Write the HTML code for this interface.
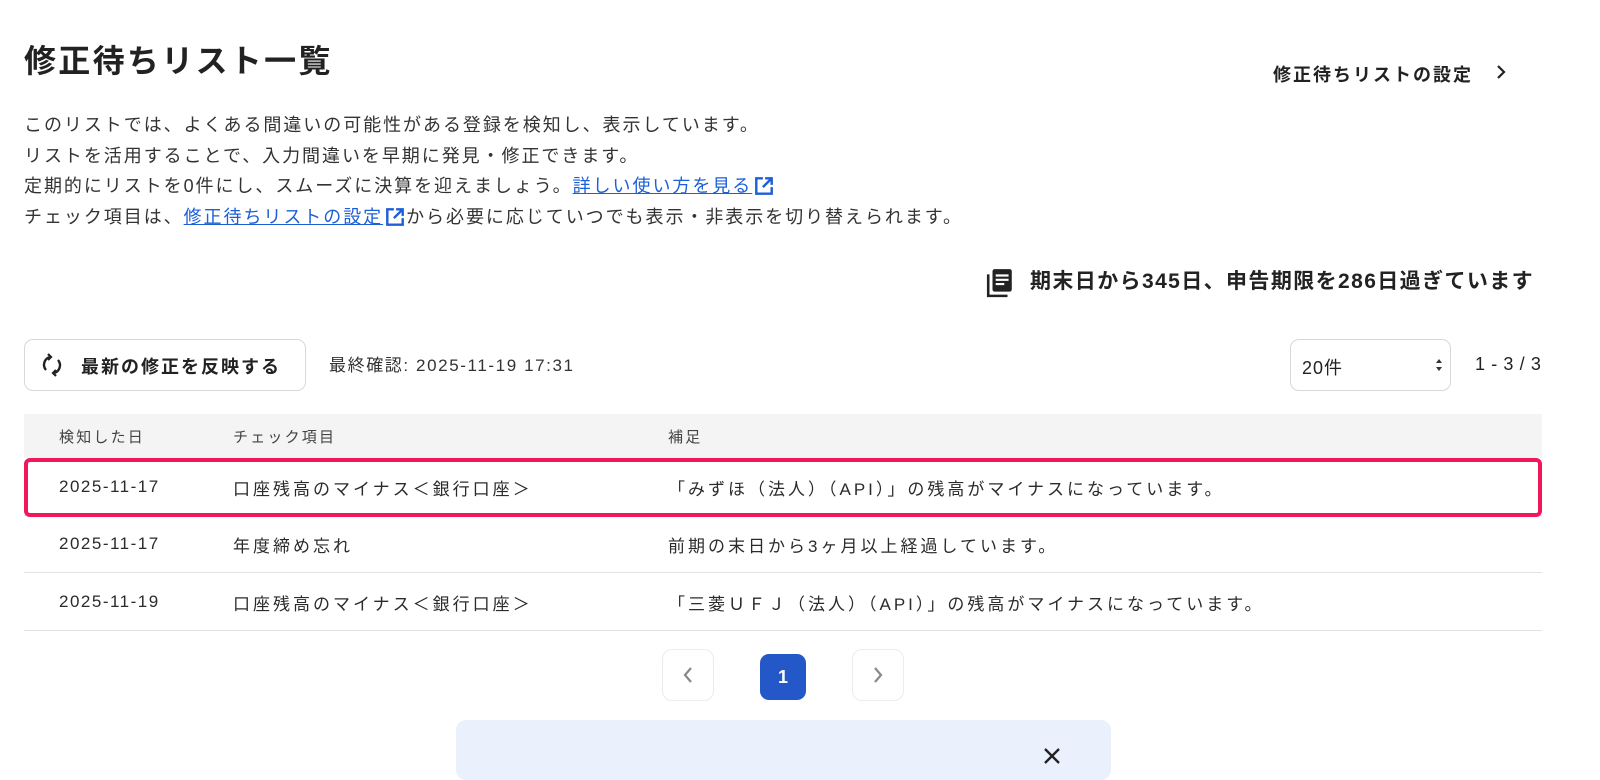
<!DOCTYPE html><html><head><meta charset="utf-8"><style>
*{margin:0;padding:0;box-sizing:border-box}
body{width:1600px;height:769px;overflow:hidden;background:#fff;font-family:"Liberation Sans","Noto Sans CJK JP",sans-serif;color:#2b2b2b;position:relative}
.a{position:absolute;white-space:nowrap}
h1{position:absolute;left:24px;top:36px;font-size:32px;letter-spacing:2.3px;font-weight:bold;color:#222}
.desc{left:24px;top:110px;font-size:18px;letter-spacing:1.95px;line-height:30.5px;color:#333}
a{color:#1d5fd6;text-decoration:underline}
.ext{display:inline-block;width:22px;height:22px;vertical-align:-5px;margin-left:1px}
.btn{left:24px;top:339px;width:282px;height:52px;border:1px solid #d8d8d8;border-radius:9px}
.thead{left:24px;top:414px;width:1518px;height:44px;background:#f5f4f4;font-size:15px;letter-spacing:2.2px;color:#444}
.row{left:24px;width:1518px;height:57px;border-bottom:1px solid #e2e2e2;font-size:17px;letter-spacing:3px;color:#2b2b2b}
.row span,.thead span{position:absolute;top:0;bottom:0;display:flex;align-items:center}
.row .c1{letter-spacing:1.5px}
.c1{left:35px}.c2{left:209px}.c3{left:644px}
.hl{left:24px;top:458px;width:1518px;height:59px;border:4px solid #f0185a;border-radius:6px}
.pg{top:649px;width:52px;height:52px;border:1px solid #ececec;border-radius:10px}
</style></head><body>
<h1>修正待ちリスト一覧</h1>
<div class="a" style="left:1273px;top:61px;font-size:18px;letter-spacing:2px;font-weight:bold;color:#222">修正待ちリストの設定</div>
<svg class="a" style="left:1494px;top:64px" width="14" height="16" viewBox="0 0 14 16"><path d="M4 2l6 6-6 6" stroke="#222" stroke-width="2.2" fill="none"/></svg>
<div class="a desc">このリストでは、よくある間違いの可能性がある登録を検知し、表示しています。<br>リストを活用することで、入力間違いを早期に発見・修正できます。<br>定期的にリストを0件にし、スムーズに決算を迎えましょう。<a>詳しい使い方を見る</a><svg class="ext" viewBox="0 0 20 20"><path d="M9 3H3v14h14v-6" stroke="#1d5fd6" stroke-width="2.2" fill="none"/><path d="M11 3h6v6M17 3l-8 8" stroke="#1d5fd6" stroke-width="2.2" fill="none"/></svg><br>チェック項目は、<a>修正待ちリストの設定</a><svg class="ext" viewBox="0 0 20 20"><path d="M9 3H3v14h14v-6" stroke="#1d5fd6" stroke-width="2.2" fill="none"/><path d="M11 3h6v6M17 3l-8 8" stroke="#1d5fd6" stroke-width="2.2" fill="none"/></svg>から必要に応じていつでも表示・非表示を切り替えられます。</div>
<svg class="a" style="left:986px;top:268px" width="28" height="30" viewBox="0 0 26 28"><path d="M2 6v20h18" stroke="#222" stroke-width="2.4" fill="none"/><rect x="6" y="1" width="18" height="21" rx="2" fill="#222"/><path d="M9 7h12M9 11h12M9 15h8" stroke="#fff" stroke-width="2"/></svg>
<div class="a" style="left:1030px;top:265px;font-size:21px;letter-spacing:1.4px;font-weight:bold;color:#222">期末日から345日、申告期限を286日過ぎています</div>
<div class="a btn"></div>
<svg class="a" style="left:40px;top:352px" width="24" height="26" viewBox="0 0 24 26"><path d="M6 18a8 8 0 0 1 4-13M18 8a8 8 0 0 1-4 13" stroke="#222" stroke-width="2.4" fill="none"/><path d="M8 2l3 3-3 3M16 24l-3-3 3-3" stroke="#222" stroke-width="2.2" fill="none"/></svg>
<div class="a" style="left:81px;top:353px;font-size:18px;letter-spacing:2px;font-weight:bold;color:#222">最新の修正を反映する</div>
<div class="a" style="left:329px;top:351px;font-size:17px;letter-spacing:1.6px;color:#333">最終確認: 2025-11-19 17:31</div>
<div class="a" style="left:1290px;top:339px;width:161px;height:52px;border:1px solid #d8d8d8;border-radius:9px"></div>
<div class="a" style="left:1302px;top:354px;font-size:18px;letter-spacing:1px;color:#222">20件</div>
<svg class="a" style="left:1435px;top:358px" width="8" height="14" viewBox="0 0 8 14"><path d="M1 5l3-4 3 4zM1 9l3 4 3-4z" fill="#333"/></svg>
<div class="a" style="left:1475px;top:354px;font-size:18px;letter-spacing:0.6px;color:#222">1 - 3 / 3</div>
<div class="a thead"><span class="c1">検知した日</span><span class="c2">チェック項目</span><span class="c3">補足</span></div>
<div class="a row" style="top:459px"><span class="c1">2025-11-17</span><span class="c2">口座残高のマイナス＜銀行口座＞</span><span class="c3">「みずほ（法人）（API）」の残高がマイナスになっています。</span></div>
<div class="a row" style="top:516px"><span class="c1">2025-11-17</span><span class="c2">年度締め忘れ</span><span class="c3">前期の末日から3ヶ月以上経過しています。</span></div>
<div class="a row" style="top:574px"><span class="c1">2025-11-19</span><span class="c2">口座残高のマイナス＜銀行口座＞</span><span class="c3">「三菱ＵＦＪ（法人）（API）」の残高がマイナスになっています。</span></div>
<div class="a hl"></div>
<div class="a pg" style="left:662px"></div>
<svg class="a" style="left:682px;top:666px" width="12" height="18" viewBox="0 0 12 18"><path d="M9 2L3 9l6 7" stroke="#888" stroke-width="2.2" fill="none"/></svg>
<div class="a" style="left:760px;top:654px;width:46px;height:46px;background:#2458c9;border-radius:9px;color:#fff;font-weight:bold;font-size:18px;text-align:center;line-height:46px">1</div>
<div class="a pg" style="left:852px"></div>
<svg class="a" style="left:872px;top:666px" width="12" height="18" viewBox="0 0 12 18"><path d="M3 2l6 7-6 7" stroke="#888" stroke-width="2.2" fill="none"/></svg>
<div class="a" style="left:456px;top:720px;width:655px;height:60px;background:#eaf1fd;border-radius:10px"></div>
<svg class="a" style="left:1042px;top:746px" width="20" height="23" viewBox="0 0 20 23"><path d="M3 3l14 14M17 3L3 17" stroke="#222" stroke-width="2.4"/></svg>
</body></html>
